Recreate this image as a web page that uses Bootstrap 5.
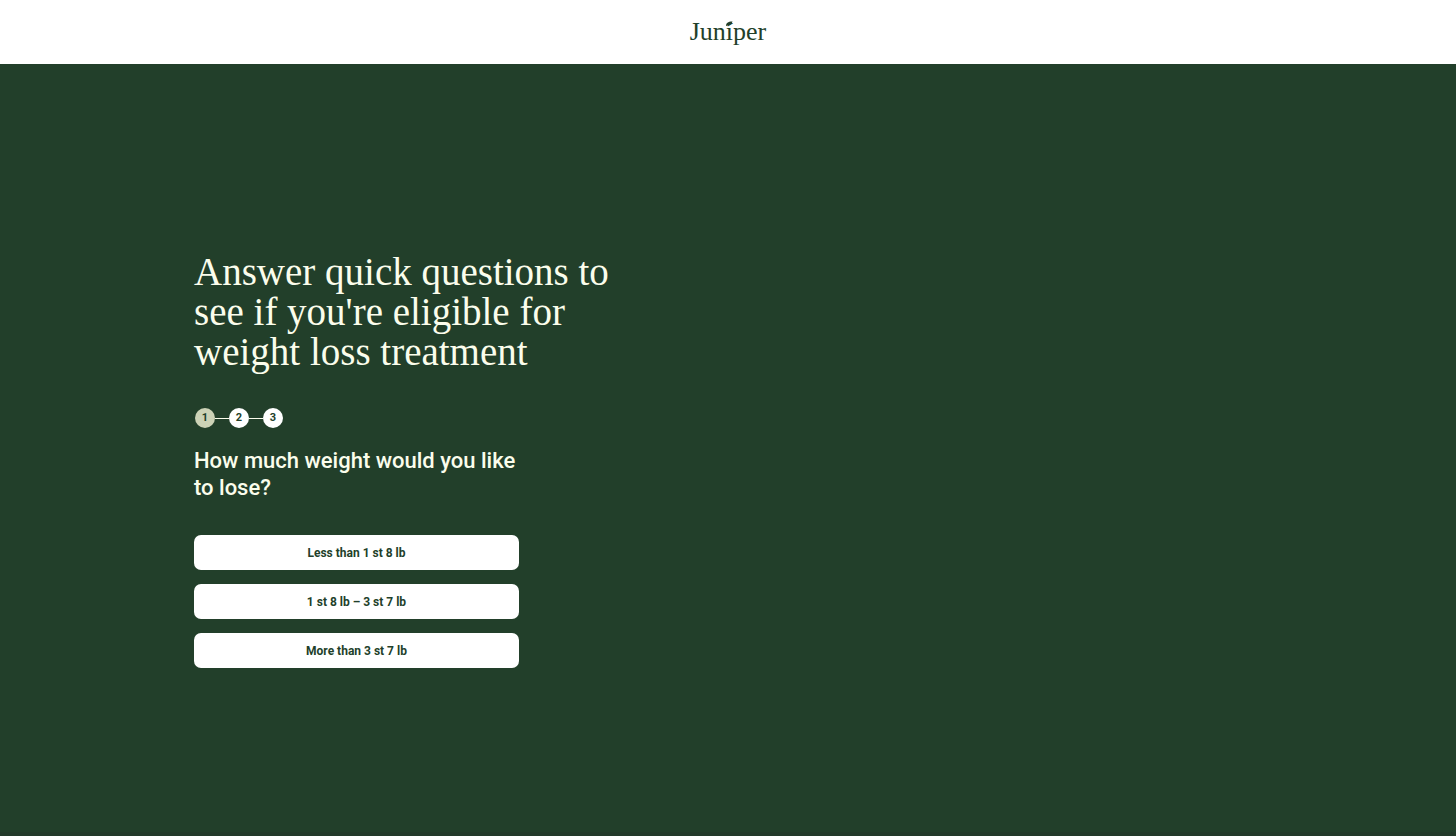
<!DOCTYPE html>
<html lang="en-GB">
<head>
<meta charset="utf-8">
<meta name="viewport" content="width=device-width, initial-scale=1">
<title>Juniper – Weight loss eligibility</title>
<link href="https://cdn.jsdelivr.net/npm/bootstrap@5.3.0/dist/css/bootstrap.min.css" rel="stylesheet">
<style>
  :root { --forest: #223f2a; --sage: #ccd2b6; --cream: #fbfdec; }
  body { background: var(--forest); font-family: Roboto, "Liberation Sans", sans-serif; color: var(--cream); }
  .site-header { height: 64px; }
  .brand { font-family: "Liberation Serif", serif; font-size: 26px; line-height: 32px; color: var(--forest); }
  .brand-leaf { left: 35px; top: 5px; }
  .quiz { padding: 44px 24px 20px; border-bottom: 4px solid #233a2a; }
  .quiz-inner { max-width: 1068px; }
  .quiz-title { font-family: "Liberation Serif", serif; font-size: 39px; line-height: 40px; font-weight: 400; margin-bottom: 36px; }
  .quiz-form { max-width: 325px; }
  .steps { margin-bottom: 19px; padding-left: 1px; }
  .step { width: 20px; height: 20px; font-size: 11px; line-height: 20px; font-weight: 700; background: #fff; color: var(--forest); }
  .step.current { background: var(--sage); }
  .step-line { width: 14px; height: 1px; background: var(--cream); }
  .question { font-size: 22px; line-height: 27px; font-weight: 500; margin-bottom: 34px; }
  .choices { gap: 14px; }
  .choice { --bs-btn-bg: #fff; --bs-btn-color: var(--forest); --bs-btn-hover-bg: var(--sage); --bs-btn-hover-color: var(--forest);
    --bs-btn-border-radius: 7px; height: 35px; padding: 0 16px; border: 0; font-size: 12px; line-height: 16px; font-weight: 700; }
</style>
</head>
<body class="d-flex flex-column min-vh-100">
<header class="site-header bg-white d-flex align-items-center justify-content-center">
  <a href="#" class="brand position-relative text-decoration-none">Juníper<svg class="brand-leaf position-absolute" width="8" height="5" viewBox="0 0 8 5" aria-hidden="true"><path d="M1 5C1 2 3 .3 7.500 .4 7 3 4.500 3.800 1 5Z" fill="currentColor"/></svg></a>
</header>
<main class="quiz flex-grow-1 d-flex align-items-center">
  <div class="quiz-inner container-fluid p-0">
    <div class="row g-0">
      <div class="col-12 col-md-5">
        <h1 class="quiz-title">Answer quick questions to see if you're eligible for weight loss treatment</h1>
        <form class="quiz-form">
          <div class="steps d-flex align-items-center" aria-label="Progress">
            <span class="step current rounded-circle text-center" aria-current="step">1</span>
            <span class="step-line"></span>
            <span class="step rounded-circle text-center">2</span>
            <span class="step-line"></span>
            <span class="step rounded-circle text-center">3</span>
          </div>
          <h2 class="question">How much weight would you like to lose?</h2>
          <div class="choices d-grid">
            <button type="button" class="btn choice">Less than 1 st 8 lb</button>
            <button type="button" class="btn choice">1 st 8 lb – 3 st 7 lb</button>
            <button type="button" class="btn choice">More than 3 st 7 lb</button>
          </div>
        </form>
      </div>
    </div>
  </div>
</main>
<script src="https://cdn.jsdelivr.net/npm/bootstrap@5.3.0/dist/js/bootstrap.bundle.min.js"></script>
</body>
</html>
